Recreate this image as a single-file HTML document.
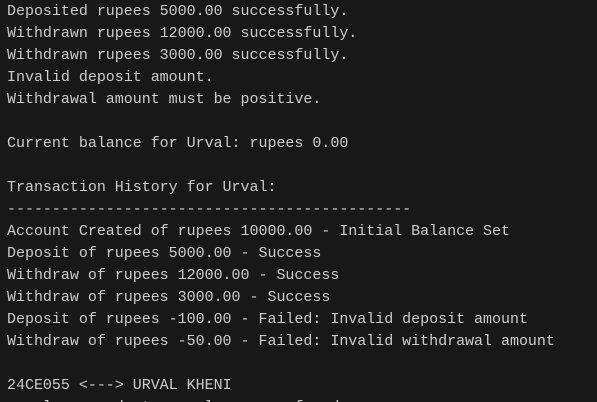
<!DOCTYPE html>
<html><head><meta charset="utf-8"><style>
html,body{margin:0;padding:0;background:#181818;width:597px;height:402px;overflow:hidden}
pre{margin:0;padding:1px 0 0 7px;font-family:"Liberation Mono",monospace;font-size:15px;line-height:22px;color:#cccccc;white-space:pre;letter-spacing:-0.02px}
</style></head><body><pre>Deposited rupees 5000.00 successfully.
Withdrawn rupees 12000.00 successfully.
Withdrawn rupees 3000.00 successfully.
Invalid deposit amount.
Withdrawal amount must be positive.

Current balance for Urval: rupees 0.00

Transaction History for Urval:
---------------------------------------------
Account Created of rupees 10000.00 - Initial Balance Set
Deposit of rupees 5000.00 - Success
Withdraw of rupees 12000.00 - Success
Withdraw of rupees 3000.00 - Success
Deposit of rupees -100.00 - Failed: Invalid deposit amount
Withdraw of rupees -50.00 - Failed: Invalid withdrawal amount

24CE055 &lt;---&gt; URVAL KHENI
    l       d  t      l         f   d</pre></body></html>
